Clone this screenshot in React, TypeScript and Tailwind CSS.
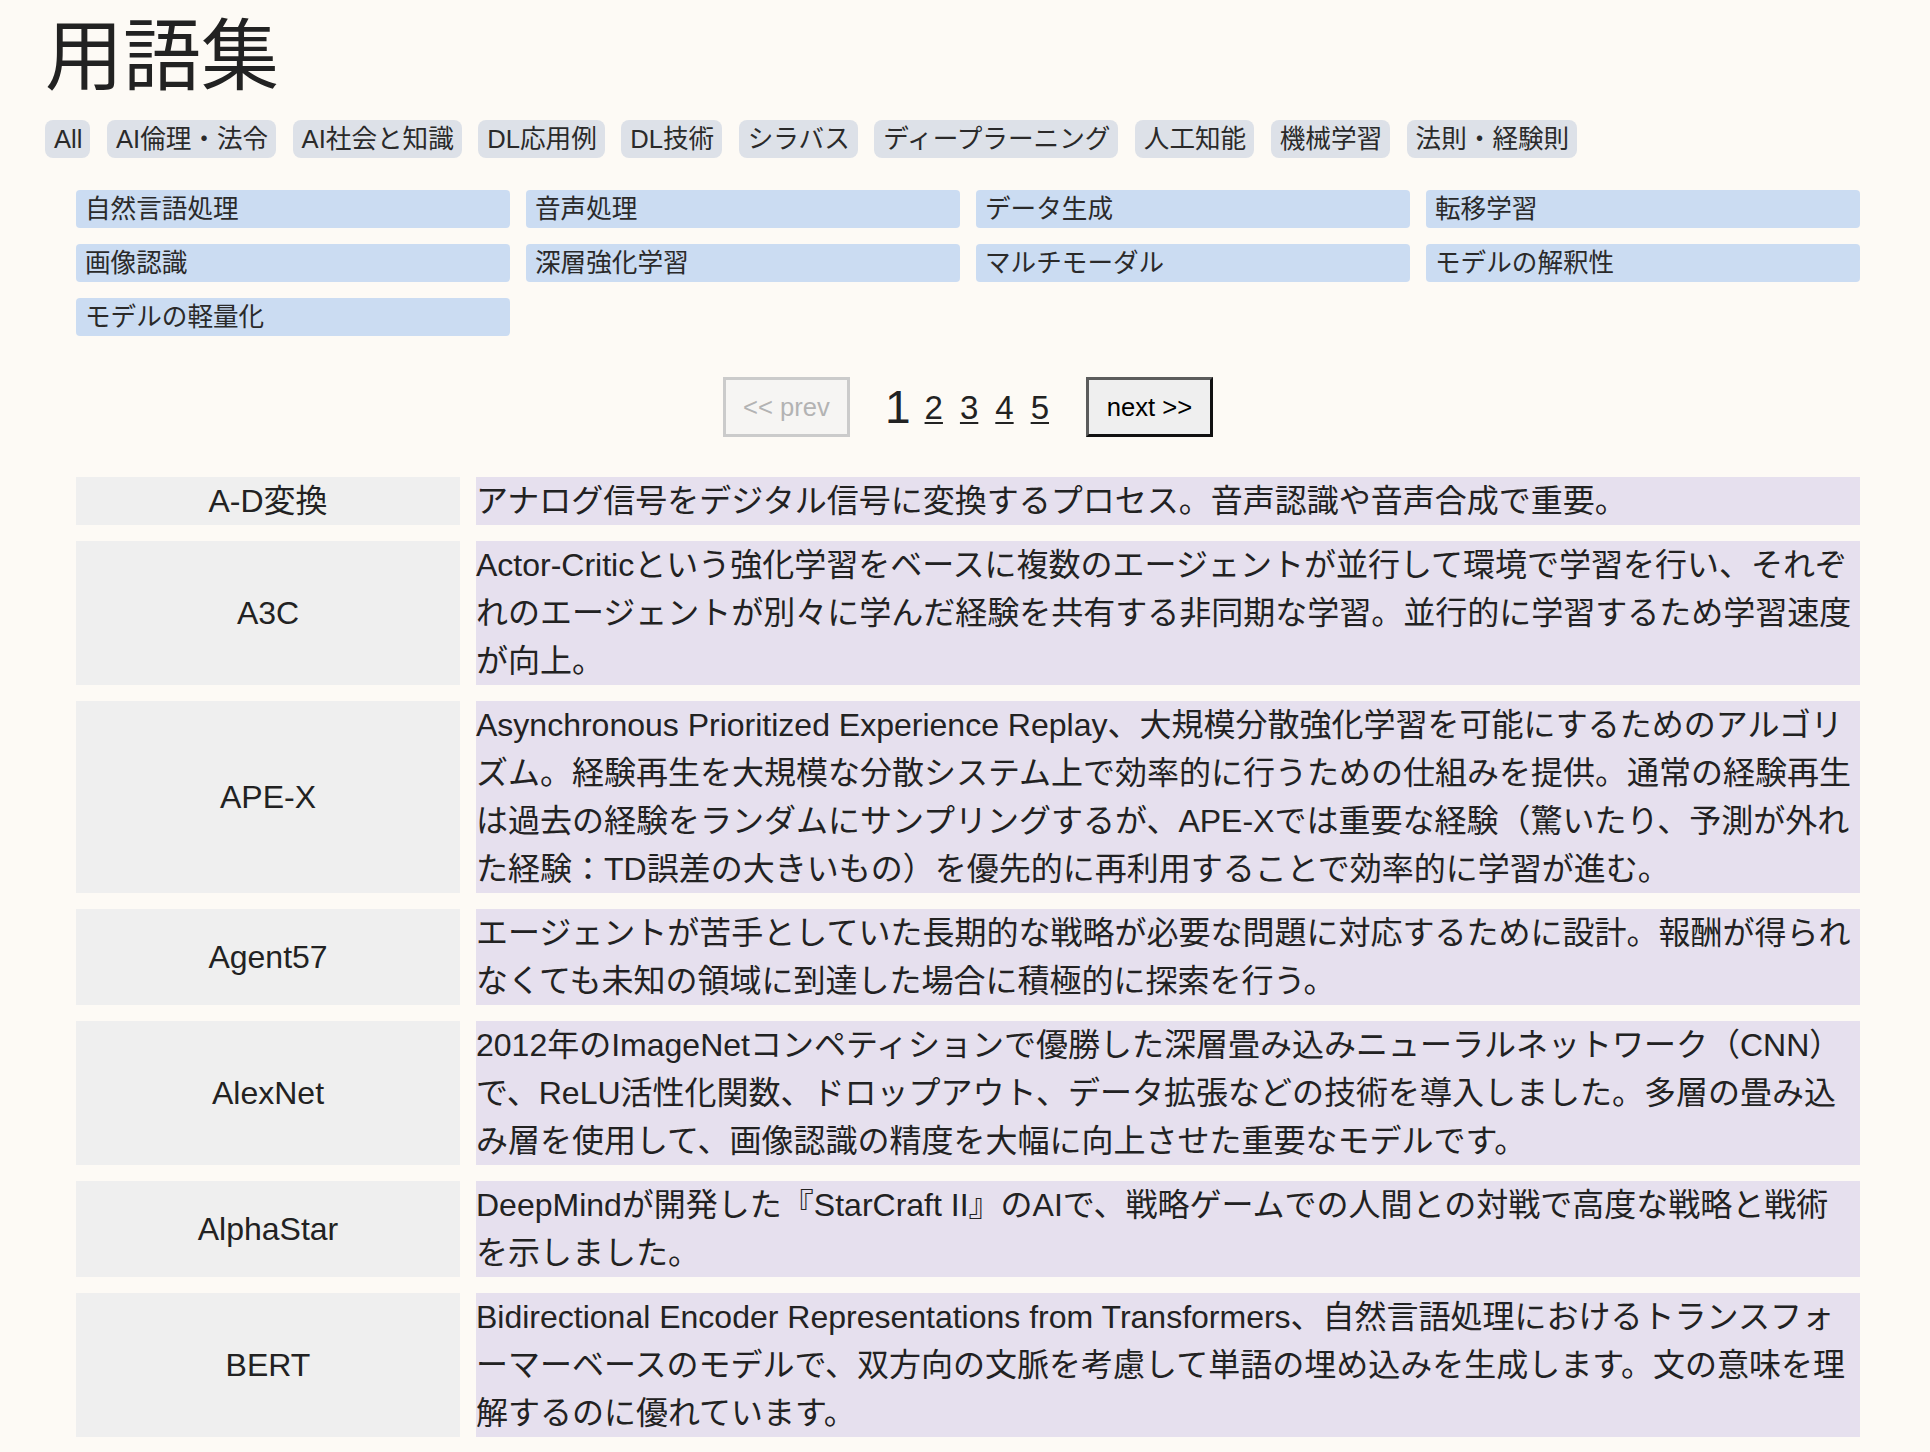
import { useState } from "react";

const FONT = "font-['Liberation_Sans','Noto_Sans_CJK_JP',sans-serif]";

const CATEGORIES = ["All", "AI倫理・法令", "AI社会と知識", "DL応用例", "DL技術", "シラバス", "ディープラーニング", "人工知能", "機械学習", "法則・経験則"];

const SUBCATEGORIES = ["自然言語処理", "音声処理", "データ生成", "転移学習", "画像認識", "深層強化学習", "マルチモーダル", "モデルの解釈性", "モデルの軽量化"];

type Term = {
  name: string;
  description: string;
};

const TERMS: Term[] = [
  { name: "A-D変換", description: "アナログ信号をデジタル信号に変換するプロセス。音声認識や音声合成で重要。" },
  {
    name: "A3C",
    description: "Actor-Criticという強化学習をベースに複数のエージェントが並行して環境で学習を行い、それぞれのエージェントが別々に学んだ経験を共有する非同期な学習。並行的に学習するため学習速度が向上。",
  },
  {
    name: "APE-X",
    description:
      "Asynchronous Prioritized Experience Replay、大規模分散強化学習を可能にするためのアルゴリズム。経験再生を大規模な分散システム上で効率的に行うための仕組みを提供。通常の経験再生は過去の経験をランダムにサンプリングするが、APE-Xでは重要な経験（驚いたり、予測が外れた経験：TD誤差の大きいもの）を優先的に再利用することで効率的に学習が進む。",
  },
  { name: "Agent57", description: "エージェントが苦手としていた長期的な戦略が必要な問題に対応するために設計。報酬が得られなくても未知の領域に到達した場合に積極的に探索を行う。" },
  {
    name: "AlexNet",
    description: "2012年のImageNetコンペティションで優勝した深層畳み込みニューラルネットワーク（CNN）で、ReLU活性化関数、ドロップアウト、データ拡張などの技術を導入しました。多層の畳み込み層を使用して、画像認識の精度を大幅に向上させた重要なモデルです。",
  },
  { name: "AlphaStar", description: "DeepMindが開発した『StarCraft II』のAIで、戦略ゲームでの人間との対戦で高度な戦略と戦術を示しました。" },
  {
    name: "BERT",
    description: "Bidirectional Encoder Representations from Transformers、自然言語処理におけるトランスフォーマーベースのモデルで、双方向の文脈を考慮して単語の埋め込みを生成します。文の意味を理解するのに優れています。",
  },
];

function Pagination() {
  const [page] = useState(1);

  return (
    <div className="mt-[41px] flex items-center justify-center">
      <button type="button" disabled className="h-[60px] w-[127px] border-[3px] border-[#cbcbcb] bg-[#f6f5f3] font-['Liberation_Sans',sans-serif] text-[25.6px] text-[#b3b3b3]">
        &lt;&lt; prev
      </button>
      <div className="ml-[35px] flex items-center gap-[17px] font-['Liberation_Sans',sans-serif] text-[#222]">
        {[1, 2, 3, 4, 5].map((item) =>
          item === page ? (
            <span key={item} className="-mr-[3px] text-[46px] leading-none">
              {item}
            </span>
          ) : (
            <a key={item} href="#" className="text-[33px] leading-none underline decoration-[2px] underline-offset-[3px]">
              {item}
            </a>
          ),
        )}
      </div>
      <button type="button" className="ml-[37px] h-[60px] w-[127px] border-[3px] border-t-[#5c5c5c] border-l-[#5c5c5c] border-r-[#111] border-b-[#111] bg-[#efefef] font-['Liberation_Sans',sans-serif] text-[25.6px] text-black">
        next &gt;&gt;
      </button>
    </div>
  );
}

export default function App() {
  return (
    <main className={`min-h-screen bg-[#fdfaf5] px-[45px] pb-[14px] pt-[18px] text-[#222] ${FONT}`}>
      <h1 className="text-[78px] font-normal leading-none">用語集</h1>

      <div className="mt-[24px] flex flex-wrap gap-[16.5px]">
        {CATEGORIES.map((category) => (
          <span key={category} className="flex h-[38px] items-center rounded-[8px] bg-[#dde1e8] pl-[9px] pr-[8px] text-[25.6px] text-[#2a2a2a]">
            {category}
          </span>
        ))}
      </div>

      <div className="ml-[31px] w-[1784px]">
        <div className="mt-[32px] grid grid-cols-4 gap-x-[16px] gap-y-[16px]">
          {SUBCATEGORIES.map((sub) => (
            <div key={sub} className="flex h-[38px] items-center rounded-[4px] bg-[#cbdcf2] px-[9px] text-[25.6px] text-[#2a2a2a]">
              {sub}
            </div>
          ))}
        </div>

        <Pagination />

        <div className="mt-[40px] grid grid-cols-[384px_1384px] gap-[16px] text-[32px] leading-[48px]">
          {TERMS.map((term) => (
            <div key={term.name} className="contents">
              <div className="flex items-center justify-center bg-[#efefef]">{term.name}</div>
              <div className="bg-[#e6e0ee]">{term.description}</div>
            </div>
          ))}
        </div>
      </div>
    </main>
  );
}
